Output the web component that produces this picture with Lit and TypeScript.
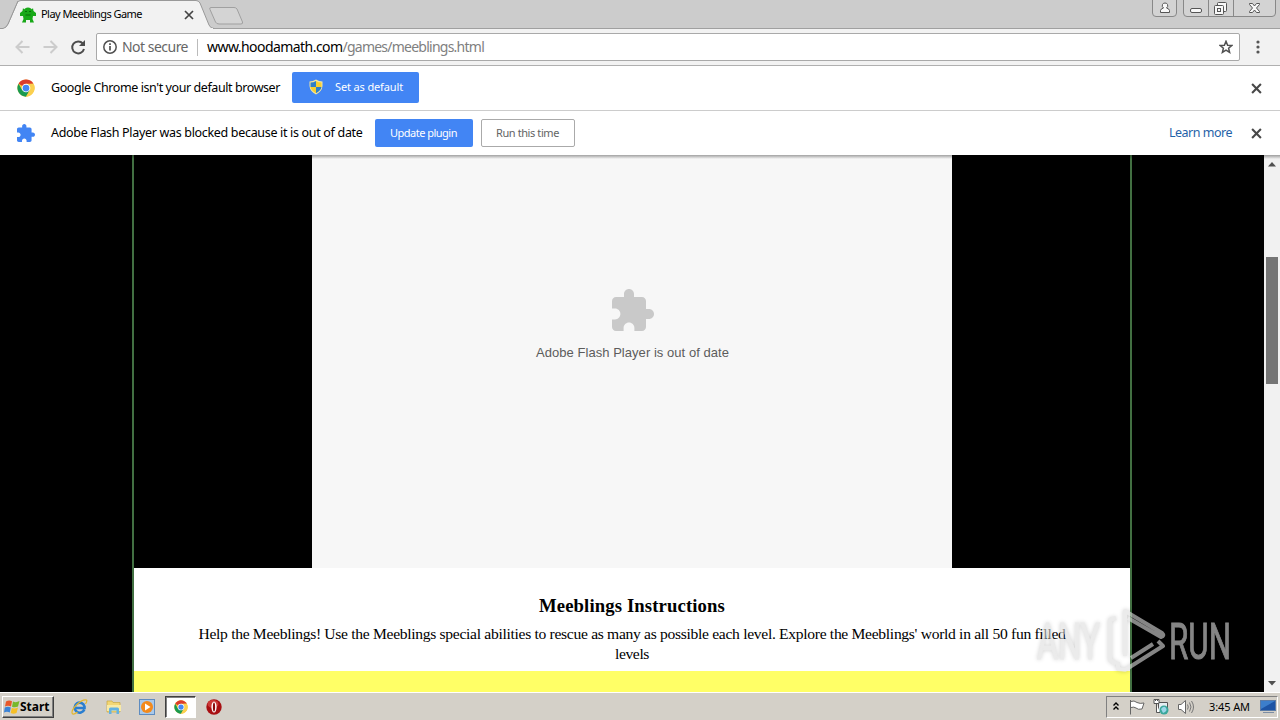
import { LitElement, html, css } from "lit";
import { customElement, property } from "lit/decorators.js";

/** Single line of text tracked so that it fills the given width. */
@customElement("fit-label")
class FitLabel extends LitElement {
  @property({ type: Number }) w = 0;
  @property() text = "";
  static styles = css`
    :host { display: inline-block; white-space: pre; flex: none; }
    span { display: inline-block; white-space: pre; }
  `;
  render() {
    return html`<span>${this.text}</span>`;
  }
  updated() {
    const s = this.renderRoot.querySelector("span") as HTMLElement;
    s.style.letterSpacing = "0px";
    const natural = s.getBoundingClientRect().width;
    s.style.letterSpacing = (this.w - natural) / this.text.length + "px";
    this.style.width = this.w + "px";
  }
}

const PUZZLE =
  "M20.5 11H19V7c0-1.1-.9-2-2-2h-4V3.500C13 2.120 11.880 1 10.500 1S8 2.120 8 3.500V5H4c-1.100 0-2 .900-2 2v3.800h1.500c1.490 0 2.700 1.210 2.700 2.700S4.990 16.200 3.500 16.200H2V20c0 1.100.900 2 2 2h3.800v-1.500c0-1.490 1.210-2.700 2.700-2.700s2.700 1.210 2.700 2.700V22H17c1.100 0 2-.900 2-2v-4h1.500c1.380 0 2.500-1.120 2.500-2.500S21.880 11 20.500 11z";

const chrome = (size: number) => html`<svg class="ic" width=${size} height=${size} viewBox="0 0 48 48">
  <circle cx="24" cy="24" r="23" fill="#fcc934" />
  <path d="M24 24L4.100 12.500A23 23 0 0 1 43.900 12.500H24z" fill="#dc3c2c" />
  <path d="M4.100 12.500A23 23 0 0 0 24 47L34 29.750L24 24L14 29.750z" fill="#1a9a50" />
  <path d="M43.900 12.500A23 23 0 0 1 24 47L34 29.750L33 13z" fill="#fbd050" />
  <circle cx="24" cy="24" r="11.500" fill="#fff" /><circle cx="24" cy="24" r="9" fill="#4587f3" />
</svg>`;

const cross = (color: string, size = 10, sw = 2) => html`<svg class="ic" width=${size} height=${size} viewBox="0 0 10 10">
  <path d="M1 1L9 9M9 1L1 9" stroke=${color} stroke-width=${sw} fill="none" />
</svg>`;

@customElement("app-root")
class AppRoot extends LitElement {
  static styles = css`
    :host {
      display: flex; flex-direction: column; width: 1280px; height: 720px; overflow: hidden;
      position: relative; font-family: "Noto Sans", sans-serif; color: #000; background: #000;
    }
    * { box-sizing: border-box; }
    .ic { display: block; flex: none; }
    .tabs { height: 29px; background: #ccc; flex: none; display: flex; position: relative; }
    .tabs > svg { position: absolute; left: 0; top: 0; }
    .tabrow { position: relative; display: flex; align-items: center; height: 29px; padding-left: 20px; width: 1152px; }
    .tabrow fit-label { font-size: 11px; line-height: 16px; margin-left: 5px; margin-top: -1px; }
    .tabrow .x { margin-left: 42px; padding-top: 1px; }
    .bar { height: 37px; flex: none; background: #f2f2f2; border-bottom: 1px solid #b0b0b0; display: flex; align-items: center; padding: 0 18px 0 14px; }
    .bar .nav { margin-right: 10px; }
    .omni { height: 28px; width: 1144px; border: 1px solid #a9a9a9; border-radius: 2px; background: #fff; display: flex; align-items: center; padding: 0 6px 0 6px; font-size: 14px; line-height: 20px; }
    .omni .ns { color: #666; margin-left: 5px; }
    .sep { width: 1px; height: 17px; background: #bbb; margin: 0 9px; }
    .path { color: #808080; }
    .grow { flex: 1; }
    .dots { margin-left: 16px; }
    .info { background: #fff; display: flex; align-items: center; flex: none; padding: 0 18.5px 0 17px; font-size: 12.5px; line-height: 18px; }
    .info.a { height: 45px; border-bottom: 1px solid #ccc; }
    .info.b { height: 44px; }
    .info .msg { margin-left: 16px; margin-top: -1px; }
    .btn { display: flex; align-items: center; justify-content: center; background: #4285f4; color: #fff; border-radius: 2px; font-size: 11px; line-height: 16px; margin-left: 12px; flex: none; }
    .b1 { width: 127px; height: 31px; justify-content: flex-start; padding-left: 17px; margin-top: -2px; }
    .b1 fit-label { margin-left: 12px; }
    .b2 { width: 98px; height: 28px; }
    .b3 { width: 94px; height: 28px; background: #fff; border: 1px solid #aaa; color: #646464; margin-left: 8px; }
    .learn { color: #1f62a8; margin-right: 18.5px; margin-top: -1px; }
    .view { height: 537px; flex: none; display: flex; background: #000; position: relative; }
    .shade { position: absolute; left: 0; top: 0; width: 1280px; height: 4px; background: linear-gradient(rgba(0,0,0,.35), rgba(0,0,0,0)); }
    .page { width: 1000px; margin-left: 132px; border-left: 2px solid #427042; border-right: 2px solid #427042; display: flex; flex-direction: column; align-items: center; }
    .flash { width: 640px; height: 413px; background: #f7f7f7; display: flex; flex-direction: column; align-items: center; padding: 133px 0 0 1px; color: #5c5c5c; font: 13px/18px "Liberation Sans", Arial, sans-serif; }
    .flash .ic { margin-left: 1px; }
    .flash fit-label { margin-top: 12px; }
    .desc { width: 996px; height: 103px; background: #fff; display: flex; flex-direction: column; align-items: center; padding-top: 27px; font: 15.6px/20px "Liberation Serif", "Times New Roman", serif; }
    .desc .h { font-weight: bold; font-size: 18.7px; line-height: 22px; margin-bottom: 7px; }
    .yellow { width: 996px; flex: 1; background: #ffff66; }
    .scroll { width: 16px; margin-left: 132px; background: #f1f1f1; display: flex; flex-direction: column; align-items: center; padding: 7px 0 6px; }
    .thumb { width: 12px; height: 127px; background: #757575; margin-top: 90px; margin-bottom: auto; }
    .task { height: 28px; flex: none; background: #d4d0c8; border-top: 1px solid #fff; display: flex; align-items: center; padding: 1px 2px 0 2px; }
    .start { width: 52px; height: 22px; display: flex; align-items: center; border: 1px solid; border-color: #fff #404040 #404040 #fff; box-shadow: inset -1px -1px #808080; font-weight: bold; font-size: 12px; line-height: 16px; padding-left: 1px; }
    .q { margin-left: 18px; }
    .q.first { margin-left: 17px; }
    .q.opera { margin-left: 10px; }
    .act { width: 31px; height: 22px; margin-left: 10px; background: #fff; border: 1px solid; border-color: #404040 #fff #fff #404040; box-shadow: inset 1px 1px #808080; display: flex; align-items: center; justify-content: center; }
    .tray { width: 172px; height: 22px; border: 1px solid; border-color: #808080 #fff #fff #808080; display: flex; align-items: center; font-size: 11px; line-height: 16px; padding-left: 5px; }
    .desk { margin-left: 10px; }
    .wm { position: absolute; left: 1034px; top: 600px; opacity: .6; filter: drop-shadow(0 0 2px rgba(0, 0, 0, .3)); }
  `;

  render() {
    return html`
      <div class="tabs">
        <svg width="1280" height="29" viewBox="0 0 1280 29">
          <rect width="1280" height="29" fill="#ccc" />
          <path d="M0 28.500H1280" stroke="#a0a0a0" />
          <path d="M0 28.500H3Q6 28 8 24L17 3Q18 .500 21 .500H196Q198.500 .500 200 3L209 25Q210.500 28.500 214 28.500V29H0z" fill="#f2f2f2" stroke="#999" />
          <path d="M3 29H213" stroke="#f2f2f2" stroke-width="2" />
          <path d="M0 0H18L8 24Q6 28 3 28.500H0z" fill="#ccc" />
          <path d="M0 28.500H3Q6 28 8 24L18 1" fill="none" stroke="#999" />
          <path d="M211 7.500H234Q236 7.500 237 9L242.500 22Q243 24 241 24H219Q216.500 24 215.500 22L210 9.500Q209 7.500 211 7.500z" fill="#d4d4d4" stroke="#a0a0a0" />
          <g fill="#d3d3d3" stroke="#888">
            <path d="M1152.500 -1V13Q1152.500 16.500 1156 16.500H1173Q1176.500 16.500 1176.500 13V-1" />
            <path d="M1183.500 -1V13Q1183.500 16.500 1187 16.500H1272Q1275.500 16.500 1275.500 13V-1" />
            <path d="M1208.500 0V16M1233.500 0V16" />
          </g>
          <g fill="#f8f8f8" stroke="#555">
            <path d="M1160.500 12.500V10.500Q1161 8.500 1163.500 8Q1161.500 6.500 1162.500 4.500Q1163 3 1165 3T1167.500 4.500Q1168.500 6.500 1166.500 8Q1169 8.500 1169.500 10.500V12.500z" />
            <rect x="1190.500" y="8.500" width="11" height="4" rx="1.500" />
            <rect x="1217.500" y="2.500" width="9" height="9" rx="1" />
            <rect x="1214.500" y="5.500" width="9" height="9" rx="1" />
            <rect x="1217.500" y="8.500" width="3" height="3" />
            <path d="M1249.500 3.500H1252.500L1254.500 6L1256.500 3.500H1259.500V4.500L1256.500 8L1259.500 11.500V12.500H1256.500L1254.500 10L1252.500 12.500H1249.500V11.500L1252.500 8L1249.500 4.500z" />
          </g>
        </svg>
        <div class="tabrow">
          <svg class="ic" width="16" height="16" viewBox="0 0 16 16">
            <path d="M3 1Q4 3 5 1.500Q8-.500 11 1.500Q12 3 13 1L13.500 4L16 6V9H13L12.500 12L14 15.500H10V13H6V15.500H2L3.500 12L3 9H0V6L2.500 4z" fill="#18a818" />
            <path d="M5 4.500H7M9 4.500H11M5.500 8H10.500" stroke="#076c07" />
          </svg>
          <fit-label .w=${101} text="Play Meeblings Game"></fit-label>
          <div class="x">${cross("#444", 10, 1.7)}</div>
        </div>
      </div>

      <div class="bar">
        <svg class="ic nav" width="72" height="20" viewBox="0 0 72 20">
          <path d="M8.500 4L2.500 10L8.500 16M2.500 10H15.500" fill="none" stroke="#ccc" stroke-width="2" />
          <path d="M36.500 4L42.500 10L36.500 16M42.500 10H29.500" fill="none" stroke="#ccc" stroke-width="2" />
          <path d="M68.800 6.500A6 6 0 1 0 70 12" fill="none" stroke="#4c4c4c" stroke-width="2" />
          <path d="M71 3V9H65z" fill="#4c4c4c" />
        </svg>
        <div class="omni">
          <svg class="ic" width="14" height="14" viewBox="0 0 14 14">
            <circle cx="7" cy="7" r="6.200" fill="none" stroke="#505050" stroke-width="1.500" />
            <path d="M7 6V10.500M7 3.200V4.900" stroke="#505050" stroke-width="1.700" />
          </svg>
          <fit-label class="ns" .w=${66} text="Not secure"></fit-label>
          <div class="sep"></div>
          <fit-label .w=${135.5} text="www.hoodamath.com"></fit-label><fit-label class="path" .w=${141.5} text="/games/meeblings.html"></fit-label>
          <div class="grow"></div>
          <svg class="ic" width="14" height="14" viewBox="0 0 14 14">
            <path d="M7 1.300L8.600 5.200L12.800 5.500L9.600 8.200L10.600 12.300L7 10.100L3.400 12.300L4.400 8.200L1.200 5.500L5.400 5.200z" fill="none" stroke="#505050" stroke-width="1.500" />
          </svg>
        </div>
        <svg class="ic dots" width="4" height="14" viewBox="0 0 4 14" fill="#555">
          <circle cx="2" cy="2" r="1.600" /><circle cx="2" cy="7" r="1.600" /><circle cx="2" cy="12" r="1.600" />
        </svg>
      </div>

      <div class="info a">
        ${chrome(18)}
        <fit-label class="msg" .w=${229} text="Google Chrome isn't your default browser"></fit-label>
        <div class="btn b1">
          <svg class="ic" width="14" height="16" viewBox="0 0 14 16">
            <path d="M7 .500Q10 2.500 13.500 2.500V7Q13 12.500 7 15.500Q1 12.500 .500 7V2.500Q4 2.500 7 .500z" fill="#f4e6a0" />
            <path d="M7 2V8H1.500V3.500Q4.500 3.500 7 2z" fill="#2f7fc8" /><path d="M7 2V8H12.500V3.500Q9.500 3.500 7 2z" fill="#f8cf30" />
            <path d="M1.500 8H7V14.200Q2 11.500 1.500 8z" fill="#f8cf30" /><path d="M12.500 8H7V14.200Q12 11.500 12.500 8z" fill="#2f7fc8" />
          </svg>
          <fit-label .w=${68} text="Set as default"></fit-label>
        </div>
        <div class="grow"></div>
        ${cross("#484848", 11, 1.9)}
      </div>

      <div class="info b">
        <svg class="ic" width="18" height="18" viewBox="2 1 21 21"><path d=${PUZZLE} fill="#4285f4" /></svg>
        <fit-label class="msg" .w=${311.5} text="Adobe Flash Player was blocked because it is out of date"></fit-label>
        <div class="btn b2"><fit-label .w=${67} text="Update plugin"></fit-label></div>
        <div class="btn b3"><fit-label .w=${63} text="Run this time"></fit-label></div>
        <div class="grow"></div>
        <fit-label class="learn" .w=${63} text="Learn more"></fit-label>
        ${cross("#484848", 11, 1.9)}
      </div>

      <div class="view">
        <div class="page">
          <div class="flash">
            <svg class="ic" width="44" height="44" viewBox="1.500 .500 22 22"><path d=${PUZZLE} fill="#c9c9c9" /></svg>
            <fit-label .w=${193} text="Adobe Flash Player is out of date"></fit-label>
          </div>
          <div class="desc">
            <fit-label class="h" .w=${186} text="Meeblings Instructions"></fit-label>
            <fit-label .w=${867} text="Help the Meeblings! Use the Meeblings special abilities to rescue as many as possible each level. Explore the Meeblings' world in all 50 fun filled"></fit-label>
            <fit-label .w=${34} text="levels"></fit-label>
          </div>
          <div class="yellow"></div>
        </div>
        <div class="scroll">
          <svg class="ic" width="8" height="5"><path d="M0 4.500L4 0L8 4.500z" fill="#505050" /></svg>
          <div class="thumb"></div>
          <svg class="ic" width="8" height="5"><path d="M0 0L4 4.500L8 0z" fill="#505050" /></svg>
        </div>
        <div class="shade"></div>
      </div>

      <div class="task">
        <div class="start">
          <svg class="ic" width="16" height="16" viewBox="0 0 16 16">
            <path d="M2 2.500Q5 .500 8 2.200L7 7.500Q4 6 1 7.500z" fill="#e8582a" />
            <path d="M9 2.500Q12 4 15.500 2L14 7.500Q11 9 8 7.800z" fill="#77b82c" />
            <path d="M.800 8.500Q4 7 6.800 8.500L5.800 13.500Q3 12 0 13.500z" fill="#3b83d6" />
            <path d="M7.800 9Q11 10 14 8.500L12.500 14Q9.500 15.500 6.700 14z" fill="#f6bf26" />
          </svg>
          <fit-label .w=${29.5} text="Start"></fit-label>
        </div>
        <svg class="ic q first" width="17" height="16" viewBox="0 0 16 16">
          <path d="M12.800 10.500A5 5 0 1 1 13 7.500V9H4" fill="none" stroke="#2a7ed0" stroke-width="2.600" />
          <path d="M1 15Q-1 12 5 6T15 1Q16 2 14 5M1 15Q3 15.500 6 13" fill="none" stroke="#e4b62c" stroke-width="1.200" />
        </svg>
        <svg class="ic q" width="16" height="16" viewBox="0 0 16 16">
          <path d="M1 2H6L7 3.500H14V13H1z" fill="#f3d774" stroke="#c9a840" stroke-width=".700" />
          <path d="M1 6H15V12H1z" fill="#f9eaa5" />
          <path d="M3 15V10Q3 8.500 4.500 8.500H11.500Q13 8.500 13 10V15H10.500V11.500H5.500V15z" fill="#63b2e2" />
        </svg>
        <svg class="ic q first" width="16" height="16" viewBox="0 0 16 16">
          <rect x=".500" y=".500" width="15" height="15" fill="#a9c9ea" stroke="#5e8cc0" />
          <circle cx="8" cy="8" r="6" fill="#f38a1c" /><path d="M6 4.500L11.500 8L6 11.500z" fill="#fff" />
        </svg>
        <div class="act">${chrome(14)}</div>
        <svg class="ic q opera" width="16" height="16" viewBox="0 0 16 16">
          <circle cx="8" cy="8" r="7.700" fill="#a80f12" /><ellipse cx="7" cy="5" rx="5.500" ry="4" fill="#cc3a38" />
          <ellipse cx="8" cy="8" rx="2.600" ry="5.500" fill="#fff" /><ellipse cx="8" cy="8" rx="1.100" ry="4.600" fill="#8c0a0c" />
        </svg>
        <div class="grow"></div>
        <div class="tray">
          <svg class="ic" width="97" height="18" viewBox="0 0 97 18">
            <path d="M1.500 7.500L4 5L6.500 7.500M1.500 11.500L4 9L6.500 11.500" fill="none" stroke="#000" stroke-width="1.400" />
            <path d="M18.500 2V16.500M19 3.500Q22 2 25 4.500Q28 6 32 5L30 11Q26 12 24 10Q22 8.500 19 9.500" fill="#fff" stroke="#666" />
            <path d="M46.500 4.500H55.500V13.500H46.500z" fill="#e6eef2" stroke="#555" />
            <path d="M42 1.500H47V5.500H42zM44.500 5.500V14.500H48M43.500 1V3M45.500 1V3" fill="#fff" stroke="#555" />
            <circle cx="52" cy="12" r="4.500" fill="#3aa79b" /><path d="M49 11Q52 7 54 10T51 15z" fill="#9dd6e8" />
            <path d="M66.500 6.500H69L73.500 2.500V15.500L69 11.500H66.500z" fill="#fff" stroke="#666" />
            <path d="M75.500 6.500Q77 9 75.500 11.500M77.500 4.500Q80.500 9 77.500 13.500M79.500 3Q83.500 9 79.500 15" fill="none" stroke="#777" />
          </svg>
          <fit-label .w=${41} text="3:45 AM"></fit-label>
          <svg class="ic desk" width="17" height="14" viewBox="0 0 17 14">
            <rect x=".500" y=".500" width="15" height="10" fill="#1d54a5" stroke="#5b7ba6" /><path d="M1 1H15L1 9z" fill="#3c7ecb" />
            <path d="M3 12H14V13H3z" fill="#7d8da3" />
          </svg>
        </div>
      </div>

      <svg class="wm" width="212" height="76" viewBox="0 0 212 76">
        <g fill="none" stroke="#dedede" stroke-width="4" stroke-linejoin="round">
          <path d="M82 18L76 20V60L82 64" />
          <path d="M91 56V11L128 33Q131 36 127 37L94 18" />
          <path d="M97 58L119 44M84 62V69L91 70L129 46L124 41" />
        </g>
        <g font-family="Roboto, sans-serif" font-size="50" fill="#dedede" stroke="#dedede" stroke-width="1">
          <text x="3" y="59" textLength="63" lengthAdjust="spacingAndGlyphs">ANY</text>
          <text x="135" y="59" textLength="62" lengthAdjust="spacingAndGlyphs">RUN</text>
        </g>
      </svg>
    `;
  }
}
